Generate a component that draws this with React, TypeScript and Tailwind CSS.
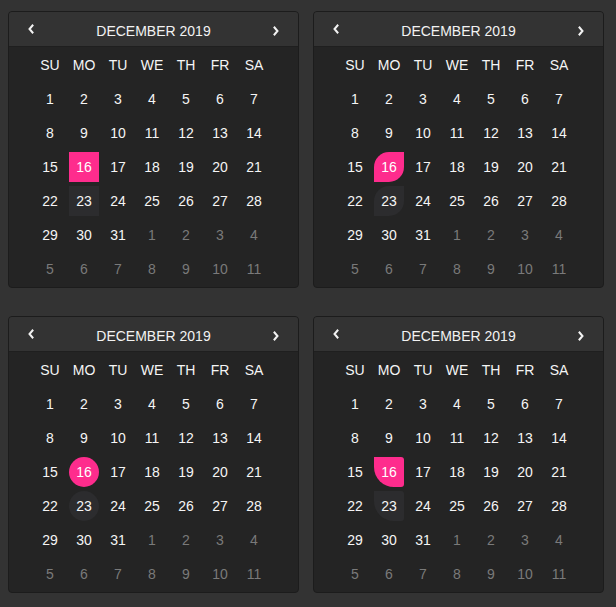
const WEEKDAYS = ["SU", "MO", "TU", "WE", "TH", "FR", "SA"];

type Day = { n: number; muted: boolean };

function buildDays(): Day[] {
  const days: Day[] = [];
  for (let i = 1; i <= 31; i++) days.push({ n: i, muted: false });
  for (let i = 1; i <= 11; i++) days.push({ n: i, muted: true });
  return days;
}

const shapes = [
  "rounded-none",
  "rounded-tl-[15px] rounded-br-[15px]",
  "rounded-full",
  "rounded-bl-[20px] rounded-tr-[3px] rounded-br-[3px]",
];

function Chevron({ dir }: { dir: "left" | "right" }) {
  return (
    <svg width="8" height="10" viewBox="0 0 8 10" fill="none">
      <polyline
        points={dir === "left" ? "5.5,1.5 2.5,5 5.5,8.5" : "2.5,1.5 5.5,5 2.5,8.5"}
        stroke="#f2f2f2"
        strokeWidth="2"
        strokeLinecap="square"
      />
    </svg>
  );
}

function Calendar({ variant }: { variant: number }) {
  const shape = shapes[variant];
  const days = buildDays();

  return (
    <div className="w-[291px] overflow-hidden rounded-[4px] border border-[#1c1c1c] bg-[#242424]">
      <div className="flex h-[35px] items-center justify-between border-b border-[#1f1f1f] bg-[#333333] px-[14px]">
        <button className="flex w-[16px] justify-center">
          <Chevron dir="left" />
        </button>
        <span className="translate-y-[2px] text-[14px] text-[#f2f2f2]">DECEMBER 2019</span>
        <button className="flex w-[16px] translate-y-[2px] justify-center">
          <Chevron dir="right" />
        </button>
      </div>
      <div className="grid grid-cols-[repeat(7,34px)] grid-rows-[repeat(7,34px)] pb-[1px] pl-[24px] pt-[1px]">
        {WEEKDAYS.map((d) => (
          <div key={d} className="flex items-center justify-center text-[14px] text-[#f5f5f5]">
            {d}
          </div>
        ))}
        {days.map((d, i) => {
          const selected = !d.muted && d.n === 16;
          const hovered = !d.muted && d.n === 23;
          return (
            <div key={i} className="flex items-center justify-center">
              <div
                className={
                  "flex h-[30px] w-[30px] items-center justify-center text-[14px] " +
                  (selected
                    ? "bg-[#fe2c8d] text-white " + shape
                    : hovered
                      ? "bg-[#2c2c2e] text-[#f5f5f5] " + shape
                      : d.muted
                        ? "text-[#7a7a7a]"
                        : "text-[#f5f5f5]")
                }
              >
                {d.n}
              </div>
            </div>
          );
        })}
      </div>
    </div>
  );
}

export default function App() {
  return (
    <div
      className="min-h-[607px] w-[616px] bg-[#333333] pl-[8px] pt-[11px]"
      style={{ fontFamily: '"Liberation Sans", Arial, sans-serif' }}
    >
      <div className="grid grid-cols-[291px_291px] gap-x-[14px] gap-y-[28px]">
        {[0, 1, 2, 3].map((v) => (
          <Calendar key={v} variant={v} />
        ))}
      </div>
    </div>
  );
}
